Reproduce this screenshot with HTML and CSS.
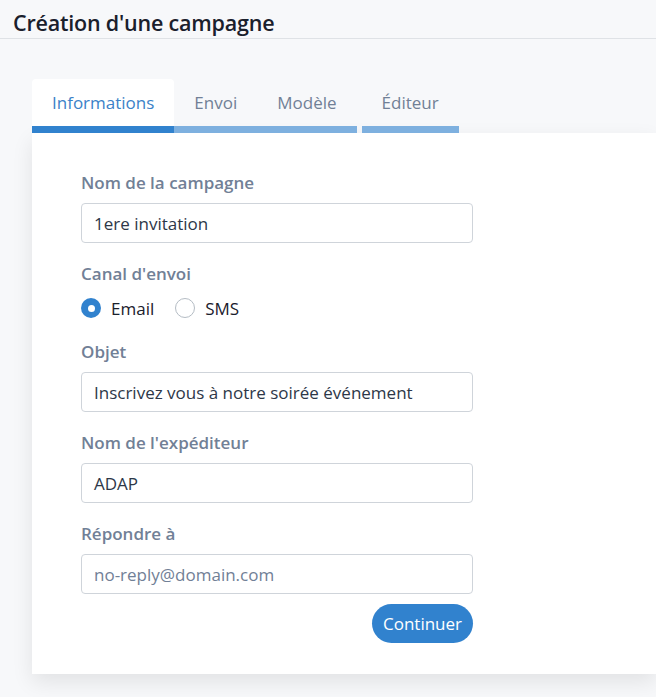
FILE: index.html
```html
<!DOCTYPE html>
<html lang="fr">
<head>
<meta charset="utf-8">
<title>Création d'une campagne</title>
<link rel="stylesheet" href="styles.css">
</head>
<body>
<header class="page-header">
  <h1 class="page-title">Création d'une campagne</h1>
</header>
<main class="wizard">
  <nav class="tabs">
    <div class="tab tab-active">Informations</div>
    <div class="tab">Envoi</div>
    <div class="tab">Modèle</div>
    <div class="tab tab-sep">Éditeur</div>
  </nav>
  <section class="card">
    <form class="form">
      <div class="field">
        <label class="label">Nom de la campagne</label>
        <div class="input">1ere invitation</div>
      </div>
      <div class="field field-radio">
        <label class="label">Canal d'envoi</label>
        <div class="radios">
          <span class="radio radio-on"></span><span class="radio-text">Email</span>
          <span class="radio"></span><span class="radio-text">SMS</span>
        </div>
      </div>
      <div class="field">
        <label class="label">Objet</label>
        <div class="input">Inscrivez vous à notre soirée événement</div>
      </div>
      <div class="field">
        <label class="label">Nom de l'expéditeur</label>
        <div class="input">ADAP</div>
      </div>
      <div class="field field-last">
        <label class="label">Répondre à</label>
        <div class="input input-placeholder">no-reply@domain.com</div>
      </div>
      <div class="actions">
        <button type="button" class="btn">Continuer</button>
      </div>
    </form>
  </section>
</main>
</body>
</html>
```
FILE: styles.css
```css
html, body {
  margin: 0;
  padding: 0;
}
body {
  background: #f7f8fa;
  font-family: "Open Sans", "Noto Sans", "DejaVu Sans", sans-serif;
  color: #2d3748;
  overflow: hidden;
  height: 697px;
}
.page-header {
  border-bottom: 1px solid #dfe2e6;
  height: 39px;
  box-sizing: border-box;
  padding: 8px 13px 0;
}
.page-title {
  margin: 0;
  font-size: 21.5px;
  line-height: 30px;
  font-weight: 600;
  color: #1a202c;
  letter-spacing: -0.2px;
}
.wizard {
  margin: 40px 0 0 32px;
}
.tabs {
  display: flex;
  align-items: flex-end;
}
.tab {
  height: 54px;
  box-sizing: border-box;
  padding: 0 20px;
  display: flex;
  align-items: center;
  font-size: 17px;
  color: #718096;
  border-bottom: 7px solid #7eb0df;
}
.tab-active {
  background: #fff;
  color: #3b82c8;
  border-bottom-color: #3182ce;
  border-radius: 4px 4px 0 0;
}
.tab-sep {
  margin-left: 5px;
}
.card {
  background: #fff;
  box-shadow: 0 8px 20px rgba(0, 0, 0, 0.09);
  padding: 38px 0 31px 49px;
  box-sizing: border-box;
}
.form {
  width: 392px;
  display: flex;
  flex-direction: column;
}
.field {
  display: flex;
  flex-direction: column;
  margin-bottom: 19px;
}
.field-radio {
  margin-bottom: 22px;
}
.field-last {
  margin-bottom: 10px;
}
.label {
  font-size: 17px;
  line-height: 24px;
  font-weight: 600;
  color: #718096;
  margin-bottom: 8px;
}
.field-radio .label {
  margin-bottom: 12px;
}
.input {
  height: 40px;
  box-sizing: border-box;
  border: 1px solid #cfd4da;
  border-radius: 4px;
  padding: 0 12px;
  display: flex;
  align-items: center;
  font-size: 17px;
  color: #2d3748;
  background: #fff;
}
.input-placeholder {
  color: #718096;
}
.radios {
  display: flex;
  align-items: center;
  height: 20px;
}
.radio {
  width: 20px;
  height: 20px;
  box-sizing: border-box;
  border-radius: 50%;
  border: 1px solid #b4bcc4;
  background: #fff;
  display: inline-block;
  position: relative;
}
.radio-on {
  border: none;
  background: #3182ce;
}
.radio-on::after {
  content: "";
  position: absolute;
  left: 6.5px;
  top: 6.5px;
  width: 7px;
  height: 7px;
  border-radius: 50%;
  background: #fff;
}
.radio-text {
  font-size: 17px;
  color: #1a202c;
  margin: 0 21px 0 10px;
}
.actions {
  display: flex;
  justify-content: flex-end;
}
.btn {
  height: 39px;
  width: 101px;
  border: none;
  border-radius: 20px;
  background: #3182ce;
  color: #fff;
  font-family: inherit;
  font-size: 17px;
  padding: 0;
}
```
